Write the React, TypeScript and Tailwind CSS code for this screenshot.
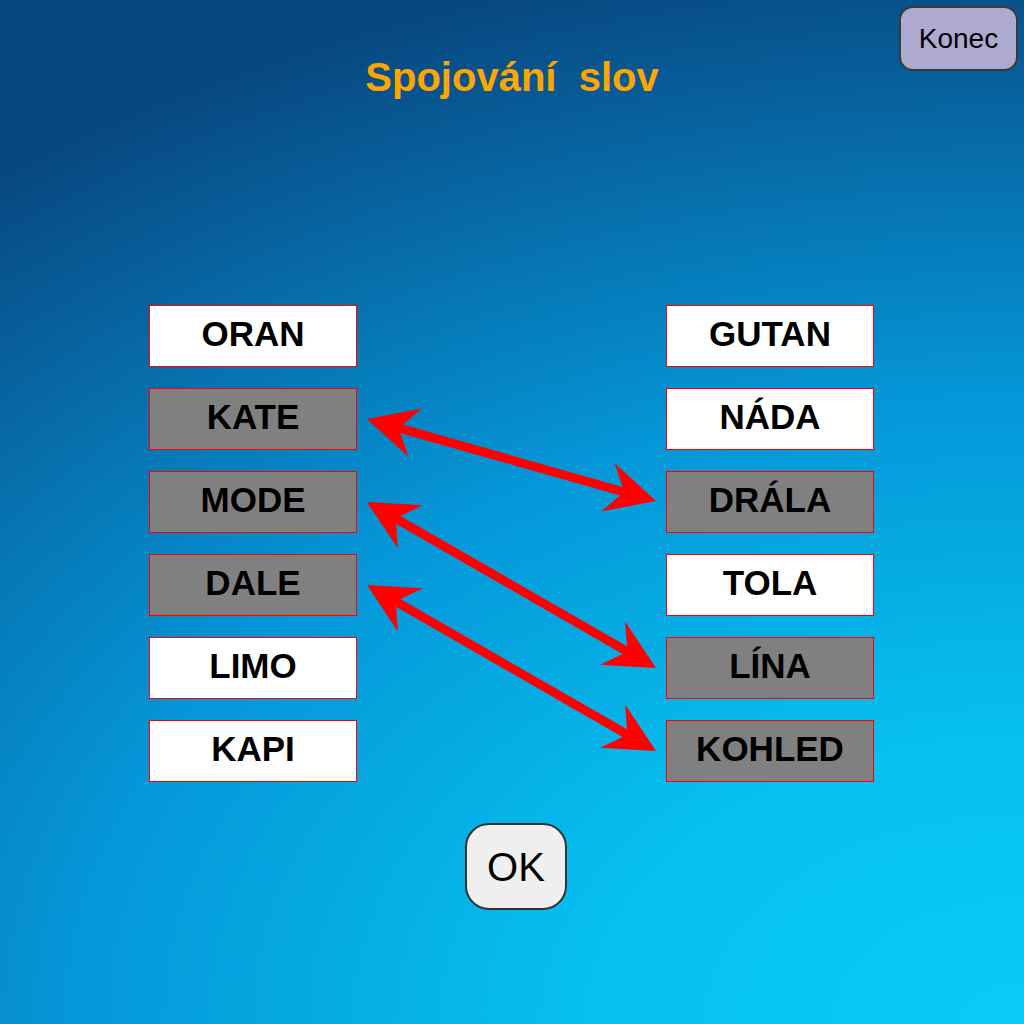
const leftWords = [
  { text: "ORAN", on: false },
  { text: "KATE", on: true },
  { text: "MODE", on: true },
  { text: "DALE", on: true },
  { text: "LIMO", on: false },
  { text: "KAPI", on: false },
];

const rightWords = [
  { text: "GUTAN", on: false },
  { text: "NÁDA", on: false },
  { text: "DRÁLA", on: true },
  { text: "TOLA", on: false },
  { text: "LÍNA", on: true },
  { text: "KOHLED", on: true },
];

// pairs drawn as double arrows, tip to tip
const links = [
  [367, 419, 656, 501],
  [367, 502, 656, 668],
  [367, 585, 656, 751],
];

function arrowPoints(x1: number, y1: number, x2: number, y2: number) {
  const dx = x2 - x1;
  const dy = y2 - y1;
  const len = Math.hypot(dx, dy);
  const ux = dx / len;
  const uy = dy / len;
  const nx = -uy;
  const ny = ux;
  const local = [
    [0, 0],
    [50, -25],
    [36, -4.4],
    [len - 36, -4.4],
    [len - 50, -25],
    [len, 0],
    [len - 50, 25],
    [len - 36, 4.4],
    [36, 4.4],
    [50, 25],
  ];
  return local
    .map(([a, b]) => `${(x1 + a * ux + b * nx).toFixed(1)},${(y1 + a * uy + b * ny).toFixed(1)}`)
    .join(" ");
}

function WordBox({ text, on }: { text: string; on: boolean }) {
  return (
    <div
      className={`
        w-[208px]
        h-[62px]
        flex
        items-center
        justify-center
        pb-[6px]
        border
        border-[#ff0000]
        text-[35px]
        font-bold
        leading-none
        text-black
        ${on ? "bg-[#808080]" : "bg-white"}
      `}
    >
      {text}
    </div>
  );
}

export default function App() {
  return (
    <div
      className="
        relative
        w-full
        h-[1024px]
        overflow-hidden
        bg-[radial-gradient(ellipse_1750px_1150px_at_100%_100%,#08ccf7_0%,#06c0f0_25%,#0596d7_55%,#08467f_95%)]
        font-['Liberation_Sans',Arial,sans-serif]
      "
    >
      <button
        className="
          absolute
          top-[6px]
          right-[6px]
          w-[119px]
          h-[65px]
          rounded-[14px]
          border-2
          border-[#3a3a3a]
          bg-[#aeaacf]
          text-[28px]
          text-black
          leading-none
        "
      >
        Konec
      </button>

      <div className="flex flex-col">
        <h1
          className="
            mt-[57px]
            text-center
            text-[40px]
            font-bold
            leading-none
            text-[#ffa500]
            whitespace-pre
          "
        >
          Spojování  slov
        </h1>

        <div className="mt-[208px] pl-[149px] flex gap-[309px]">
          <div className="flex flex-col gap-[21px]">
            {leftWords.map((w) => (
              <WordBox key={w.text} text={w.text} on={w.on} />
            ))}
          </div>
          <div className="flex flex-col gap-[21px]">
            {rightWords.map((w) => (
              <WordBox key={w.text} text={w.text} on={w.on} />
            ))}
          </div>
        </div>

        <div className="mt-[41px] flex justify-center">
          <button
            className="
              ml-[8px]
              w-[102px]
              h-[87px]
              rounded-[24px]
              border-2
              border-[#333333]
              bg-[#efefef]
              text-[40px]
              text-black
              leading-none
            "
          >
            OK
          </button>
        </div>
      </div>

      <svg className="absolute inset-0 pointer-events-none" width="1024" height="1024">
        {links.map(([x1, y1, x2, y2], i) => (
          <polygon key={i} points={arrowPoints(x1, y1, x2, y2)} fill="#ff0000" />
        ))}
      </svg>
    </div>
  );
}
